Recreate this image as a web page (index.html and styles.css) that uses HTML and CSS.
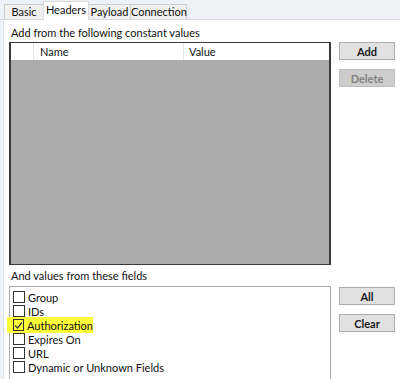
FILE: index.html
```html
<!DOCTYPE html>
<html>
<head>
    <title>Headers</title>
    <link rel="stylesheet" href="styles.css">
</head>
<body>
    <div class="tabs">
        <div class="tab tab-basic">Basic</div>
        <div class="tab tab-headers active">Headers</div>
        <div class="tab tab-payload">Payload</div>
        <div class="tab tab-connection">Connection</div>
    </div>
    <div class="panel">
        <div class="caption">Add from the following constant values</div>
        <div class="section">
            <div class="grid">
                <div class="grid-head">
                    <div class="col-sel"></div>
                    <div class="col-name">Name</div>
                    <div class="col-value">Value</div>
                </div>
                <div class="grid-body"></div>
            </div>
            <div class="buttons">
                <button class="btn">Add</button>
                <button class="btn" disabled>Delete</button>
            </div>
        </div>

        <div class="caption caption-fields">And values from these fields</div>
        <div class="section">
            <div class="checklist">
                <div class="item"><span class="box"></span>Group</div>
                <div class="item"><span class="box"></span>IDs</div>
                <div class="item highlight"><span class="box checked">
                    <svg width="9" height="9" viewBox="0 0 9 9"><path d="M1 4.5 L3.5 7 L8 1.5" fill="none" stroke="#333" stroke-width="1.2"/></svg>
                </span>Authorization</div>
                <div class="item"><span class="box"></span>Expires On</div>
                <div class="item"><span class="box"></span>URL</div>
                <div class="item"><span class="box"></span>Dynamic or Unknown Fields</div>
            </div>
            <div class="buttons buttons-fields">
                <button class="btn">All</button>
                <button class="btn">Clear</button>
            </div>
        </div>
    </div>
</body>
</html>
```

FILE: styles.css
```css
body {
    font-family: Lato, "Open Sans", Arial, sans-serif;
    font-size: 11px;
    color: #111;
    background-color: #eef1f8;
    margin: 0;
    padding: 0;
    height: 379px;
    overflow: hidden;
}

.tabs {
    display: flex;
    align-items: flex-end;
    height: 19px;
    padding-left: 4px;
    border-bottom: 1px solid #d9d9d9;
}

.tab {
    box-sizing: border-box;
    flex-shrink: 0;
    height: 15px;
    line-height: 14px;
    text-align: center;
    white-space: nowrap;
    background-color: #f0f0f0;
    border: 1px solid #cdcdcd;
    border-bottom: none;
    margin-right: -1px;
}

.tab-basic {
    width: 40px;
}

.tab-headers {
    width: 46px;
}

.tab-payload {
    width: 43px;
}

.tab-connection {
    width: 57px;
}

.tab.active {
    height: 19px;
    line-height: 16px;
    background-color: #fff;
    border-color: #d9d9d9;
    margin-bottom: -1px;
    position: relative;
}

.panel {
    background-color: #fff;
    margin-left: 3px;
    border-left: 1px solid #dde3ee;
    padding: 4px 5px 0 5px;
    height: 360px;
}

.caption {
    height: 17px;
    line-height: 17px;
    padding-left: 2px;
    margin-bottom: 1px;
}

.caption-fields {
    margin-top: 2px;
    margin-bottom: 2px;
}

.section {
    display: flex;
    align-items: flex-start;
}

.grid {
    width: 319px;
    height: 221px;
    border: 1px solid #3a3a3a;
    border-left-width: 2px;
    border-right-width: 2px;
    display: flex;
    flex-direction: column;
}

.grid-head {
    display: flex;
    height: 17px;
    line-height: 17px;
    background-color: #fff;
}

.col-sel {
    width: 22px;
    border-right: 1px solid #e5e5e5;
}

.col-name {
    width: 143px;
    padding-left: 6px;
    border-right: 1px solid #e5e5e5;
}

.col-value {
    padding-left: 5px;
}

.grid-body {
    flex: 1;
    background-color: #ababab;
}

.buttons {
    display: flex;
    flex-direction: column;
    gap: 9px;
    margin-left: 8px;
}

.buttons-fields {
    margin-top: 1px;
}

.btn {
    width: 56px;
    height: 18px;
    padding: 0;
    font-family: inherit;
    font-size: 11px;
    font-weight: 700;
    color: #1a1a1a;
    background-color: #e1e1e1;
    border: 1px solid #adadad;
}

.btn:disabled {
    background-color: #cccccc;
    border-color: #bfbfbf;
    color: #838383;
}

.checklist {
    width: 321px;
    height: 100px;
    border: 1px solid #acacac;
    padding-top: 3px;
}

.item {
    display: flex;
    align-items: center;
    height: 14px;
    padding-left: 3px;
    white-space: nowrap;
}

.item.highlight {
    box-sizing: border-box;
    background-color: #ffff3a;
    margin: -1px 0 -1px -3px;
    padding-left: 6px;
    width: 86px;
    height: 16px;
}

.box {
    width: 10px;
    height: 10px;
    border: 1px solid #333;
    background-color: #fff;
    margin-right: 3px;
    display: flex;
    align-items: center;
    justify-content: center;
}

.box.checked {
    background-color: transparent;
}
```
